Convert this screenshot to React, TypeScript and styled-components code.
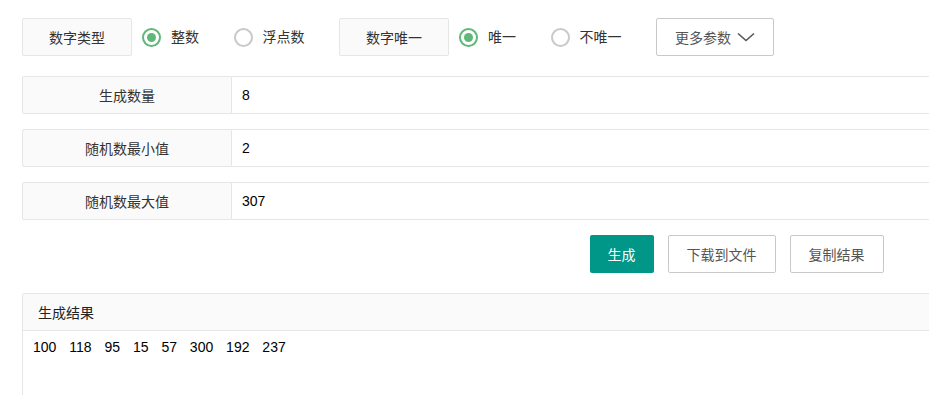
import React from "react";
import styled, { createGlobalStyle } from "styled-components";

const Global = createGlobalStyle`
  html, body { margin: 0; padding: 0; background: #fff; overflow: hidden; }
  body {
    font-family: "Liberation Sans", "Noto Sans CJK SC", sans-serif;
    font-size: 14px;
    color: #333;
  }
`;

const Page = styled.div`
  width: 1429px;
  padding: 18px 0 0 22px;
  display: flex;
  flex-direction: column;
`;

const Toolbar = styled.div`
  display: flex;
  align-items: center;
  height: 38px;
`;

const TagLabel = styled.div`
  box-sizing: border-box;
  width: 110px;
  height: 38px;
  border: 1px solid #e6e6e6;
  border-radius: 2px;
  background: #fafafa;
  display: flex;
  align-items: center;
  justify-content: center;
  margin-right: 10px;
`;

const RadioItem = styled.label`
  display: flex;
  align-items: center;
  margin-right: 34.5px;
  line-height: 20px;
  cursor: pointer;
`;

const RadioIcon = styled.span<{ $checked?: boolean }>`
  box-sizing: border-box;
  width: 19px;
  height: 19px;
  border-radius: 50%;
  border: 2px solid ${(p) => (p.$checked ? "#5FB878" : "#c9c9c9")};
  display: flex;
  align-items: center;
  justify-content: center;
  margin-right: 10px;
  &::after {
    content: "";
    display: ${(p) => (p.$checked ? "block" : "none")};
    width: 9px;
    height: 9px;
    border-radius: 50%;
    background: #5FB878;
  }
`;

const OutlineButton = styled.button`
  box-sizing: border-box;
  height: 38px;
  padding: 0 18px;
  border: 1px solid #c9c9c9;
  border-radius: 2px;
  background: #fff;
  color: #555;
  font: inherit;
  display: flex;
  align-items: center;
  gap: 6px;
  cursor: pointer;
`;

const PrimaryButton = styled(OutlineButton)`
  border: none;
  background: #009688;
  color: #fff;
`;

const FormRow = styled.div<{ $top: number }>`
  display: flex;
  height: 38px;
  margin-top: ${(p) => p.$top}px;
`;

const RowLabel = styled.div`
  box-sizing: border-box;
  width: 210px;
  flex: none;
  border: 1px solid #e6e6e6;
  border-radius: 2px 0 0 2px;
  background: #fafafa;
  display: flex;
  align-items: center;
  justify-content: center;
`;

const RowInput = styled.div`
  box-sizing: border-box;
  flex: 1;
  border: 1px solid #e6e6e6;
  border-left: none;
  display: flex;
  align-items: center;
  padding-left: 10px;
  color: #000;
`;

const ButtonBar = styled.div`
  display: flex;
  justify-content: center;
  gap: 14px;
  margin-top: 15px;
`;

const ResultPanel = styled.div`
  margin-top: 20px;
  border: 1px solid #e6e6e6;
  border-radius: 2px;
  height: 200px;
`;

const ResultHeader = styled.div`
  height: 36px;
  background: #fafafa;
  border-bottom: 1px solid #e6e6e6;
  display: flex;
  align-items: center;
  padding-left: 15px;
  color: #222;
`;

const ResultBody = styled.div`
  padding: 6px 10px;
  line-height: 20px;
  white-space: pre;
  word-spacing: 9px;
  color: #000;
`;

const Chevron = () => (
  <svg width="18" height="10" viewBox="0 0 18 10" fill="none">
    <path d="M1 1.5 L9 8.5 L17 1.5" stroke="#555" strokeWidth="1.6" />
  </svg>
);

const numbers = [100, 118, 95, 15, 57, 300, 192, 237];

export default function App() {
  return (
    <>
      <Global />
      <Page>
        <Toolbar>
          <TagLabel>数字类型</TagLabel>
          <RadioItem>
            <RadioIcon $checked />
            整数
          </RadioItem>
          <RadioItem>
            <RadioIcon />
            浮点数
          </RadioItem>
          <TagLabel>数字唯一</TagLabel>
          <RadioItem>
            <RadioIcon $checked />
            唯一
          </RadioItem>
          <RadioItem>
            <RadioIcon />
            不唯一
          </RadioItem>
          <OutlineButton>
            更多参数 <Chevron />
          </OutlineButton>
        </Toolbar>

        <FormRow $top={20}>
          <RowLabel>生成数量</RowLabel>
          <RowInput>8</RowInput>
        </FormRow>
        <FormRow $top={15}>
          <RowLabel>随机数最小值</RowLabel>
          <RowInput>2</RowInput>
        </FormRow>
        <FormRow $top={15}>
          <RowLabel>随机数最大值</RowLabel>
          <RowInput>307</RowInput>
        </FormRow>

        <ButtonBar>
          <PrimaryButton>生成</PrimaryButton>
          <OutlineButton>下载到文件</OutlineButton>
          <OutlineButton>复制结果</OutlineButton>
        </ButtonBar>

        <ResultPanel>
          <ResultHeader>生成结果</ResultHeader>
          <ResultBody>{numbers.join(" ")}</ResultBody>
        </ResultPanel>
      </Page>
    </>
  );
}
